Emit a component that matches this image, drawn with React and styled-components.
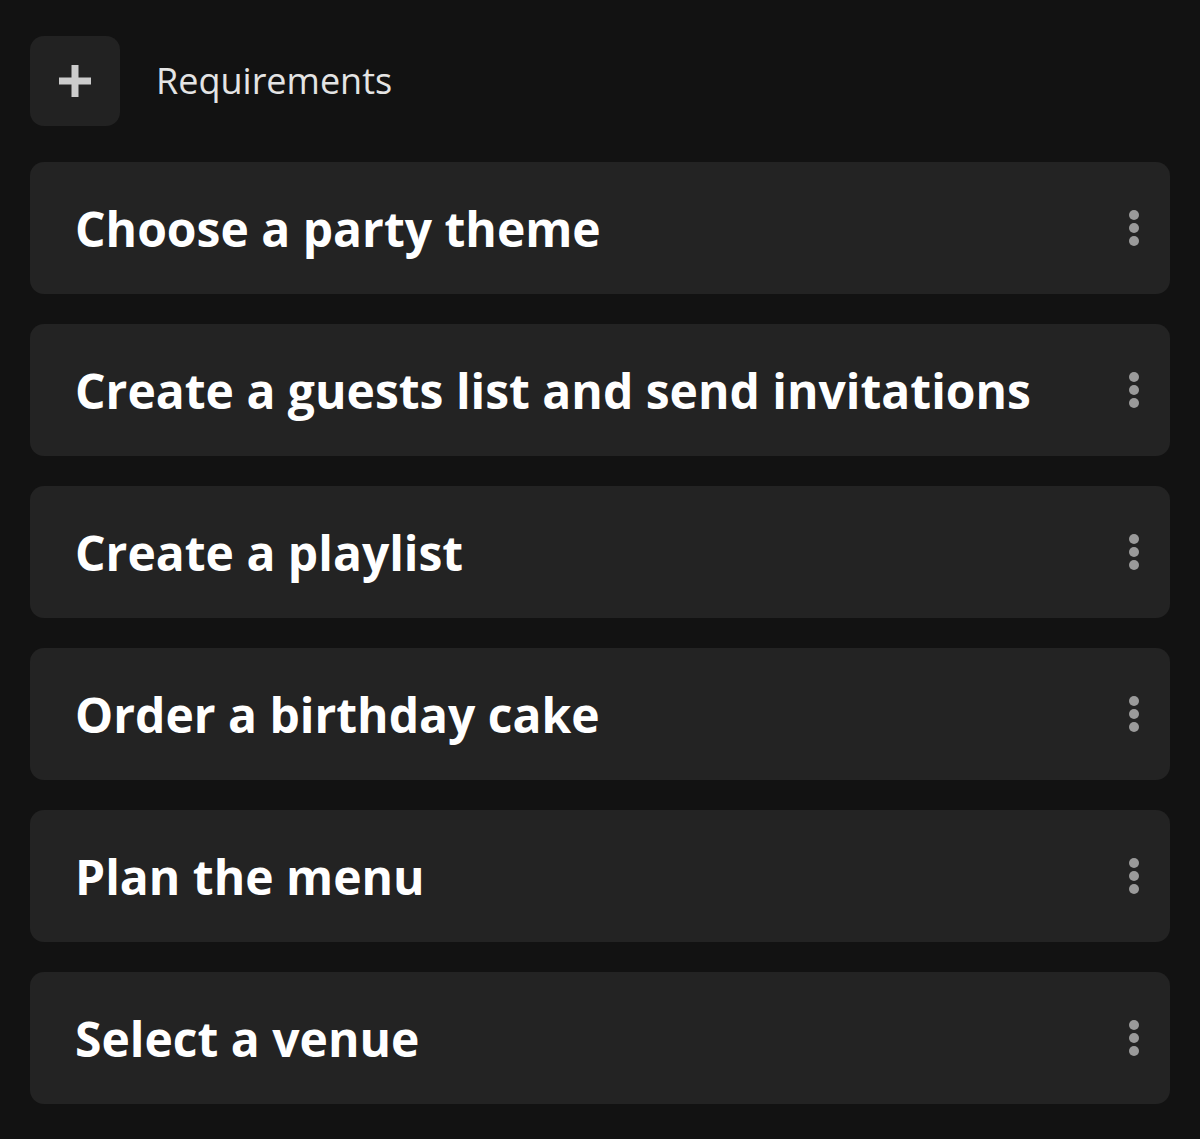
import React from 'react';
import styled, { createGlobalStyle } from 'styled-components';

const GlobalStyle = createGlobalStyle`
	body {
		margin: 0;
		background: #121212;
		font-family: 'Open Sans', 'Noto Sans', sans-serif;
	}
`;

const StyledPage = styled.main`
	padding: 36px 30px 34px;
	display: flex;
	flex-direction: column;
	gap: 36px;
`;

const StyledHeader = styled.header`
	display: flex;
	align-items: center;
	gap: 36px;
`;

const StyledAddButton = styled.button`
	width: 90px;
	height: 90px;
	border: none;
	border-radius: 14px;
	background: #222222;
	display: flex;
	align-items: center;
	justify-content: center;
	padding: 0;
	cursor: pointer;
`;

const StyledHeading = styled.h2`
	margin: 0;
	font-size: 36px;
	font-weight: 400;
	color: #e4e4e4;
	padding-bottom: 2px;
`;

const StyledList = styled.ul`
	list-style: none;
	margin: 0;
	padding: 0;
	display: flex;
	flex-direction: column;
	gap: 30px;
`;

const StyledCard = styled.li`
	height: 132px;
	box-sizing: border-box;
	background: #232323;
	border-radius: 14px;
	display: flex;
	align-items: center;
	justify-content: space-between;
	padding: 0 21px 0 45px;
`;

const StyledTitle = styled.h3`
	margin: 0;
	font-size: 48px;
	font-weight: 700;
	color: #ffffff;
`;

const StyledMenuButton = styled.button`
	border: none;
	background: none;
	padding: 4px 10px;
	display: flex;
	flex-direction: column;
	gap: 3px;
	cursor: pointer;
`;

const StyledDot = styled.span`
	width: 10px;
	height: 10px;
	border-radius: 50%;
	background: #9a9a9a;
`;

const tasks = [
	'Choose a party theme',
	'Create a guests list and send invitations',
	'Create a playlist',
	'Order a birthday cake',
	'Plan the menu',
	'Select a venue',
];

const PlusIcon = () => (
	<svg width="32" height="32" viewBox="0 0 32 32">
		<rect x="12.5" y="0" width="7" height="32" fill="#cccccc" />
		<rect x="0" y="12.5" width="32" height="7" fill="#cccccc" />
	</svg>
);

export default function App() {
	return (
		<>
			<GlobalStyle />
			<StyledPage>
				<StyledHeader>
					<StyledAddButton aria-label="Add requirement">
						<PlusIcon />
					</StyledAddButton>
					<StyledHeading>Requirements</StyledHeading>
				</StyledHeader>

				{/* Requirement cards */}
				<StyledList>
					{tasks.map((task) => (
						<StyledCard key={task}>
							<StyledTitle>{task}</StyledTitle>
							<StyledMenuButton aria-label="More options">
								<StyledDot />
								<StyledDot />
								<StyledDot />
							</StyledMenuButton>
						</StyledCard>
					))}
				</StyledList>
			</StyledPage>
		</>
	);
}
